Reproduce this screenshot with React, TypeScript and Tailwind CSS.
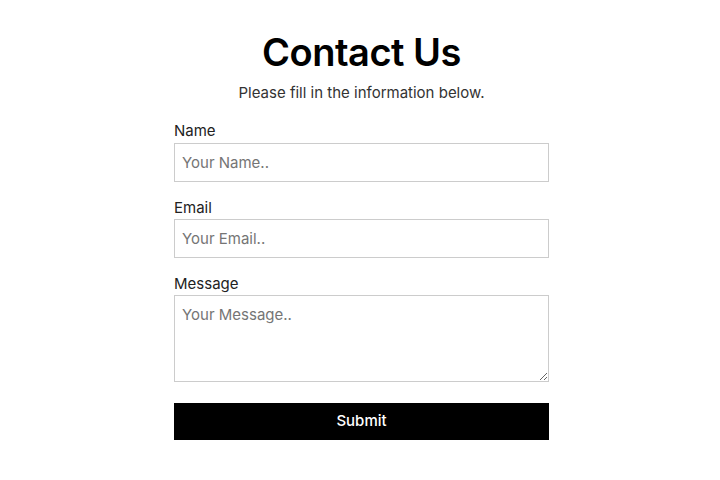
const fieldCls =
  "block w-full h-[39px] border border-[#cccccc] bg-white px-[7px] text-[15px] text-[#333] placeholder:text-[#757575] outline-none";

export default function App() {
  return (
    <div
      className="min-h-[480px] bg-white pl-[3px]"
      style={{ fontFamily: "Inter, 'Noto Sans', sans-serif" }}
    >
      <div className="mx-auto w-[375px] pt-[28px]">
        <h1 className="text-center text-[38px] leading-[48px] font-semibold text-black tracking-[-0.5px]">
          Contact Us
        </h1>
        <p className="mt-[6px] text-center text-[15px] leading-[22px] text-[#333]">
          Please fill in the information below.
        </p>
        <form className="mt-[16px]" onSubmit={(e) => e.preventDefault()}>
          <label className="block text-[15px] leading-[22px] text-[#222]">Name</label>
          <input className={`mt-[1px] ${fieldCls}`} placeholder="Your Name.." />
          <label className="mt-[15px] block text-[15px] leading-[22px] text-[#222]">Email</label>
          <input className={fieldCls} placeholder="Your Email.." />
          <label className="mt-[15px] block text-[15px] leading-[22px] text-[#222]">Message</label>
          <textarea
            className="block w-full h-[87px] border border-[#cccccc] bg-white px-[7px] py-[8px] text-[15px] leading-[22px] text-[#333] placeholder:text-[#757575] outline-none"
            placeholder="Your Message.."
          />
          <button
            type="submit"
            className="mt-[21px] block w-full h-[37px] bg-black text-white text-[15px] font-medium"
          >
            Submit
          </button>
        </form>
      </div>
    </div>
  );
}
